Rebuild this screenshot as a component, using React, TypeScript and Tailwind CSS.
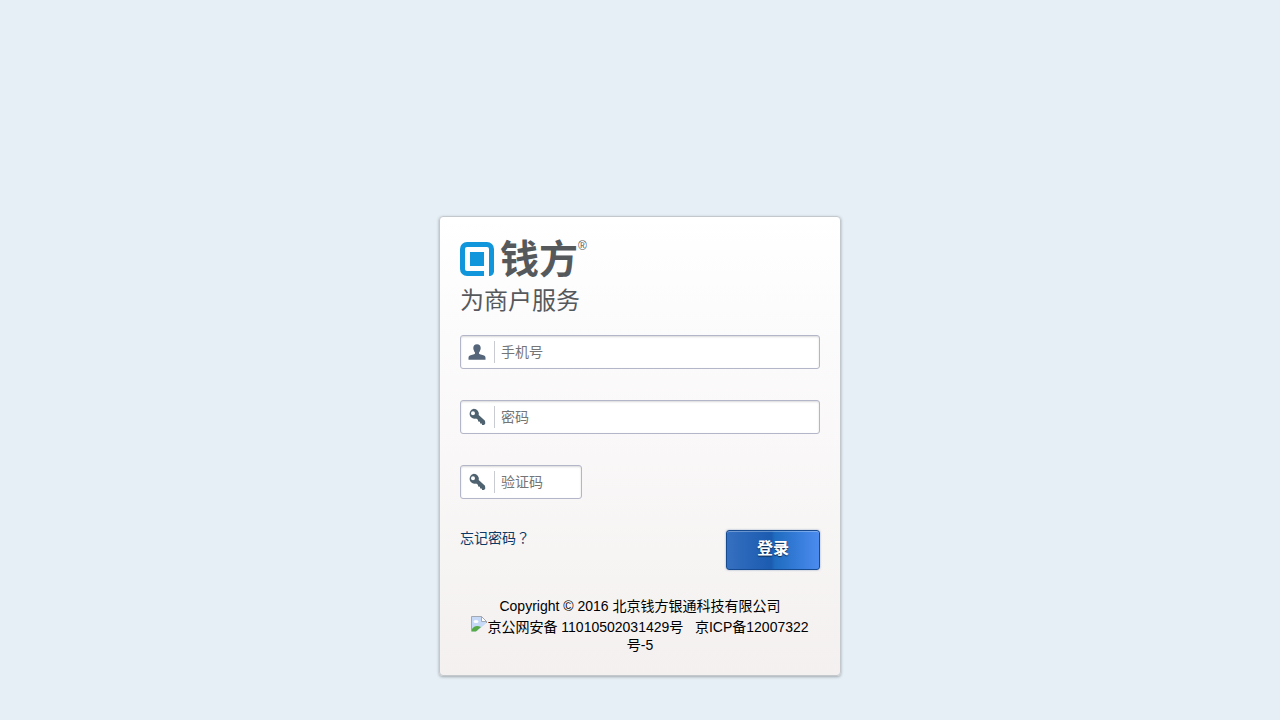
import type { ReactNode } from "react";

function UserIcon() {
  return (
    <svg width="18" height="16" viewBox="0 0 18 16" fill="#55657a" aria-hidden="true">
      <path d="M9 .3c2.400 0 3.700 1.400 3.700 3.700 0 1-.2 1.600-.5 2.200-.3 1.200-.8 1.900-1.200 2.400v.9c.4.700 1.300.9 2.700 1.300 2.400.7 3.800 1.300 3.800 2.900v2H.5v-2c0-1.600 1.400-2.200 3.800-2.900C5.700 10.400 6.600 10.200 7 9.500v-.9C6.600 8.100 6.100 7.400 5.800 6.200c-.3-.6-.5-1.200-.5-2.200C5.300 1.700 6.600.3 9 .3z" />
    </svg>
  );
}

function KeyIcon() {
  return (
    <svg width="18" height="18" viewBox="0 0 18 18" fill="#4f6270" aria-hidden="true">
      <path
        fillRule="evenodd"
        d="M5.800.8a5 5 0 0 1 4.900 6.200l6.300 5.700.3 2.800-1.200 1.600h-2l-.4-1.700h-1.500l-.3-1.700-1.700-.1-.3-1.900-1.800-1.200A5 5 0 1 1 5.800.8zM5 3.200a2 2 0 1 0 0 4 2 2 0 0 0 0-4z"
      />
    </svg>
  );
}

function BrokenImage() {
  return (
    <svg className="inline-block align-baseline" width="16" height="16" viewBox="0 0 16 16" aria-hidden="true">
      <path d="M.5.500h10l5 5V7L6 15.500H.5z" fill="#c6d9f7" />
      <path d="M.5 15.500V.5h10l5 5V7" fill="none" stroke="#a3a9b2" />
      <path d="M10.500.5v5h5z" fill="#fff" stroke="#a3a9b2" />
      <ellipse cx="5" cy="5.500" rx="2.500" ry="1.500" fill="#fff" />
      <path d="M1 15.500V13c2-3 5-4 9-2l-5 4.500z" fill="#58aa48" />
      <path d="M16 7v9H5z" fill="#f5f1f1" />
    </svg>
  );
}

type FieldProps = {
  id: string;
  label: string;
  type?: string;
  icon: ReactNode;
  className?: string;
};

function Field({ id, label, type = "text", icon, className = "w-full" }: FieldProps) {
  return (
    <div
      className={`flex h-[34px] items-center rounded-[3px] border border-[#b3b5c8] bg-white shadow-[inset_0_1px_2px_rgba(0,0,0,0.15)] ${className}`}
    >
      <label htmlFor={id} aria-label={label} className="flex h-[22px] w-[34px] shrink-0 items-center border-r border-[#c9cbd3] pl-[7px]">
        {icon}
      </label>
      <input
        id={id}
        type={type}
        placeholder={label}
        className="h-full w-full min-w-0 bg-transparent px-1.5 text-sm text-black outline-none placeholder:text-[#757575]"
      />
    </div>
  );
}

function Logo() {
  return (
    <div className="font-['Liberation_Sans','Noto_Sans_CJK_SC',sans-serif] text-[#56595c]">
      <div className="flex h-[34px] items-center">
        <svg width="34" height="34" viewBox="0 0 34 34" aria-hidden="true">
          <path d="M24 31.500H7A4.500 4.500 0 0 1 2.500 27V7A4.500 4.500 0 0 1 7 2.500h20A4.500 4.500 0 0 1 31.500 7v23" fill="none" stroke="#1296db" strokeWidth="5" />
          <path d="M29 34v-5h5c0 3-2 5-5 5z" fill="#1296db" />
          <path d="M10 10h14v14H10z" fill="#1296db" />
        </svg>
        <span className="ml-1.5 pt-0.5 text-[39px] leading-[34px] font-bold">钱方</span>
        <span className="self-start text-xs leading-2">®</span>
      </div>
      <p className="mt-[9px] text-2xl leading-8">为商户服务</p>
    </div>
  );
}

export default function App() {
  return (
    <div className="min-h-screen bg-[#e6eff6] px-4 pt-[30vh] pb-11 font-['Liberation_Sans','Noto_Sans_CJK_JP','Noto_Sans_CJK_SC',sans-serif] text-sm text-black">
      <main className="mx-auto max-w-[402px] rounded border border-[#c3c8cd] bg-linear-to-b from-white to-[#f4f0f0] px-5 pt-[25px] pb-5 shadow-[0_1px_3px_rgba(0,0,0,0.3)]">
        <Logo />
        <form className="mt-[18px]" onSubmit={(e) => e.preventDefault()}>
          <div className="flex flex-col gap-[31px]">
            <Field id="mobile" label="手机号" icon={<UserIcon />} />
            <Field id="password" label="密码" type="password" icon={<KeyIcon />} />
            <Field id="captcha" label="验证码" icon={<KeyIcon />} className="w-[122px]" />
          </div>
          <div className="mt-[31px] flex items-start justify-between">
            <a href="#" className="leading-4 text-[#0b3a66]">
              忘记密码？
            </a>
            <button
              type="submit"
              className="h-10 w-[94px] rounded-[3px] border border-[#174b91] bg-[linear-gradient(90deg,#356fc0_0%,#1b5bb0_48%,#1f6cc0_52%,#4b8bf0_100%)] pb-0.5 text-base font-bold text-white shadow-[inset_0_1px_0_rgba(255,255,255,0.3),0_0_2px_rgba(23,75,145,0.5)] text-shadow-[0_1px_1px_rgba(0,0,0,0.6)]"
            >
              登录
            </button>
          </div>
        </form>
        <footer className="mt-7 px-2.5 text-center leading-[18px]">
          <p className="mb-0.5 leading-4">Copyright © 2016 北京钱方银通科技有限公司</p>
          <p className="pb-px">
            <BrokenImage />
            京公网安备 11010502031429号&nbsp;&nbsp; 京ICP备12007322号-5
          </p>
        </footer>
      </main>
    </div>
  );
}
